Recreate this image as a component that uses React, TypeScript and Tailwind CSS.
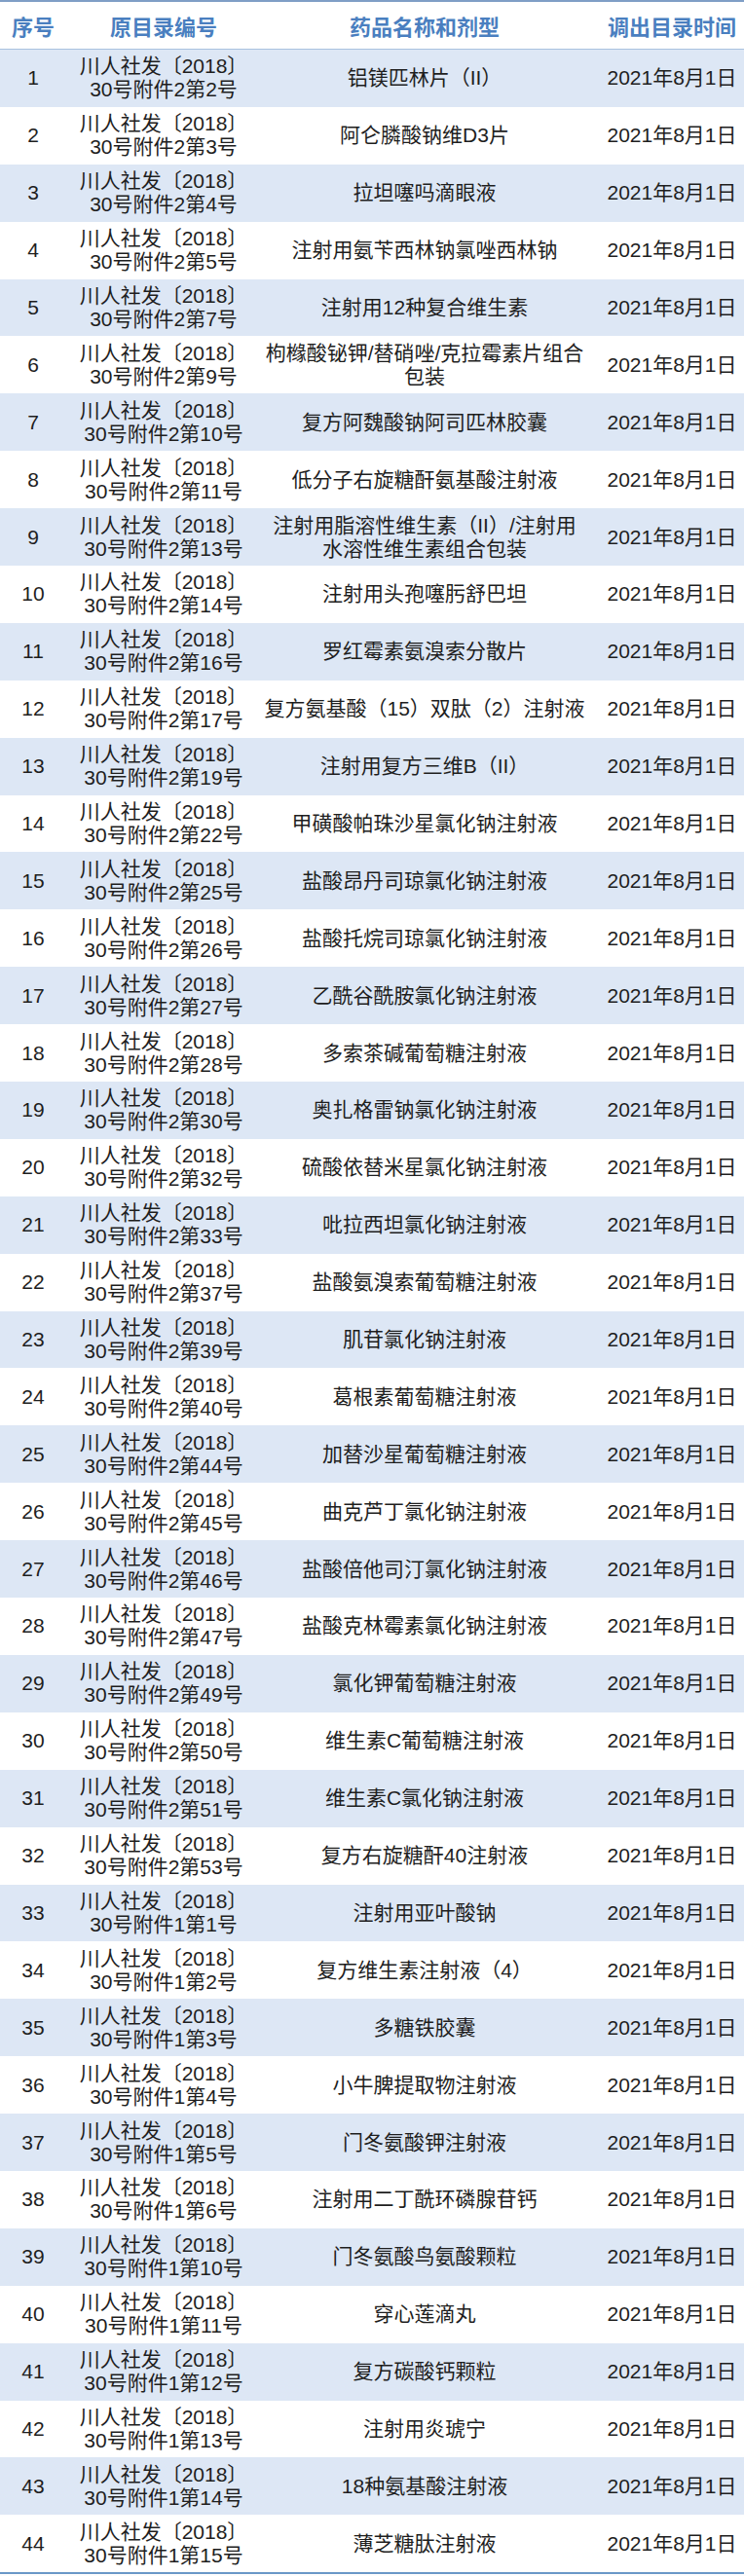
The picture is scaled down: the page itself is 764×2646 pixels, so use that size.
const rows: [string, string, string][] = [
  ["1", "2第2号", "铝镁匹林片（II）"],
  ["2", "2第3号", "阿仑膦酸钠维D3片"],
  ["3", "2第4号", "拉坦噻吗滴眼液"],
  ["4", "2第5号", "注射用氨苄西林钠氯唑西林钠"],
  ["5", "2第7号", "注射用12种复合维生素"],
  ["6", "2第9号", "枸橼酸铋钾/替硝唑/克拉霉素片组合\n包装"],
  ["7", "2第10号", "复方阿魏酸钠阿司匹林胶囊"],
  ["8", "2第11号", "低分子右旋糖酐氨基酸注射液"],
  ["9", "2第13号", "注射用脂溶性维生素（II）/注射用\n水溶性维生素组合包装"],
  ["10", "2第14号", "注射用头孢噻肟舒巴坦"],
  ["11", "2第16号", "罗红霉素氨溴索分散片"],
  ["12", "2第17号", "复方氨基酸（15）双肽（2）注射液"],
  ["13", "2第19号", "注射用复方三维B（II）"],
  ["14", "2第22号", "甲磺酸帕珠沙星氯化钠注射液"],
  ["15", "2第25号", "盐酸昂丹司琼氯化钠注射液"],
  ["16", "2第26号", "盐酸托烷司琼氯化钠注射液"],
  ["17", "2第27号", "乙酰谷酰胺氯化钠注射液"],
  ["18", "2第28号", "多索茶碱葡萄糖注射液"],
  ["19", "2第30号", "奥扎格雷钠氯化钠注射液"],
  ["20", "2第32号", "硫酸依替米星氯化钠注射液"],
  ["21", "2第33号", "吡拉西坦氯化钠注射液"],
  ["22", "2第37号", "盐酸氨溴索葡萄糖注射液"],
  ["23", "2第39号", "肌苷氯化钠注射液"],
  ["24", "2第40号", "葛根素葡萄糖注射液"],
  ["25", "2第44号", "加替沙星葡萄糖注射液"],
  ["26", "2第45号", "曲克芦丁氯化钠注射液"],
  ["27", "2第46号", "盐酸倍他司汀氯化钠注射液"],
  ["28", "2第47号", "盐酸克林霉素氯化钠注射液"],
  ["29", "2第49号", "氯化钾葡萄糖注射液"],
  ["30", "2第50号", "维生素C葡萄糖注射液"],
  ["31", "2第51号", "维生素C氯化钠注射液"],
  ["32", "2第53号", "复方右旋糖酐40注射液"],
  ["33", "1第1号", "注射用亚叶酸钠"],
  ["34", "1第2号", "复方维生素注射液（4）"],
  ["35", "1第3号", "多糖铁胶囊"],
  ["36", "1第4号", "小牛脾提取物注射液"],
  ["37", "1第5号", "门冬氨酸钾注射液"],
  ["38", "1第6号", "注射用二丁酰环磷腺苷钙"],
  ["39", "1第10号", "门冬氨酸鸟氨酸颗粒"],
  ["40", "1第11号", "穿心莲滴丸"],
  ["41", "1第12号", "复方碳酸钙颗粒"],
  ["42", "1第13号", "注射用炎琥宁"],
  ["43", "1第14号", "18种氨基酸注射液"],
  ["44", "1第15号", "薄芝糖肽注射液"],
];

const cols = "grid grid-cols-[68px_200px_336px_160px]";

export default function App() {
  return (
    <div className="w-[764px] bg-white font-['Liberation_Sans','Noto_Sans_CJK_SC',sans-serif] text-[21px] leading-[24px] text-[#1e1e1e]">
      <div className={`${cols} h-[51px] items-center border-t-2 border-b border-t-[#7f9ec6] border-b-[#a9c1df] font-['Noto_Sans_CJK_SC',sans-serif] text-[22px] font-bold text-[#4a7fc0]`}>
        <div className="text-center">序号</div>
        <div className="text-center">原目录编号</div>
        <div className="text-center">药品名称和剂型</div>
        <div className="pl-[12px] text-center">调出目录时间</div>
      </div>
      {rows.map(([no, code, name], i) => (
        <div
          key={no}
          className={`${cols} h-[58.9px] items-center ${i % 2 === 0 ? "bg-[#dde7f5]" : "bg-white"}`}
        >
          <div className="text-center">{no}</div>
          <div className="text-center whitespace-nowrap">
            <div>川人社发〔2018〕</div>
            <div>30号附件{code}</div>
          </div>
          <div className="text-center whitespace-pre">{name}</div>
          <div className="pl-[12px] text-center whitespace-nowrap">2021年8月1日</div>
        </div>
      ))}
      <div className="h-[2px] bg-[#6b98c8]" />
    </div>
  );
}
